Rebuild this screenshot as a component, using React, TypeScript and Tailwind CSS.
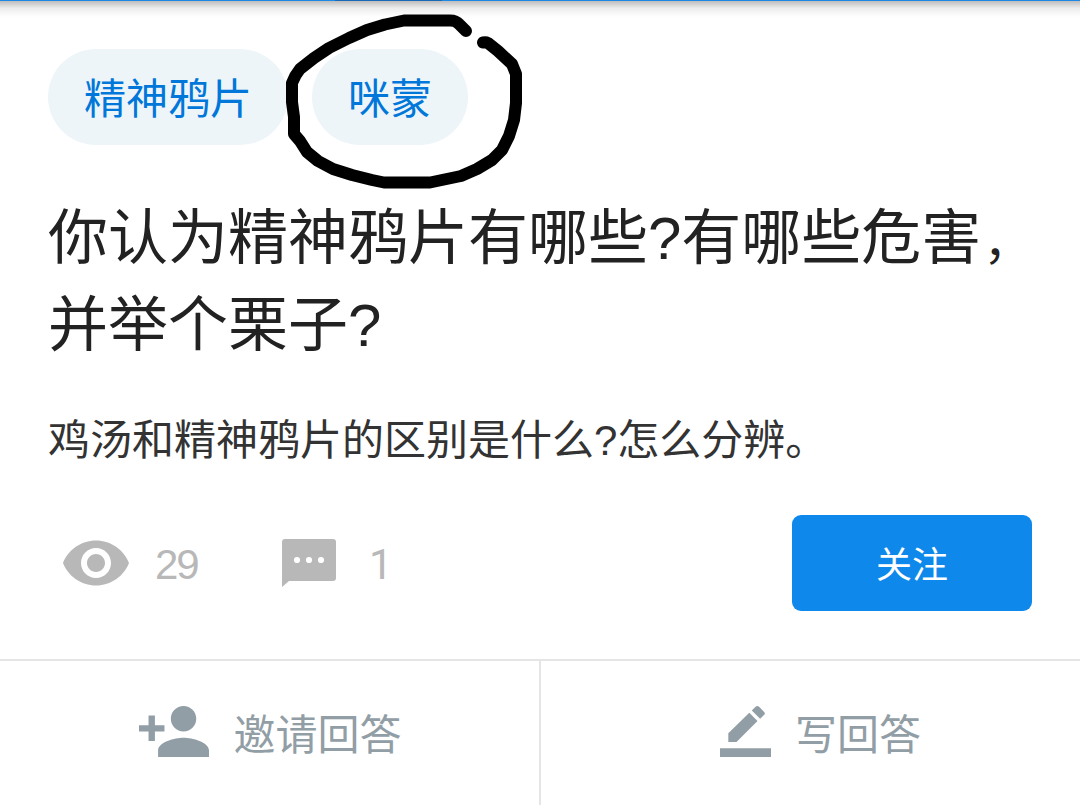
import type { ReactNode } from "react";

const tags = ["精神鸦片", "咪蒙"];

function EyeIcon() {
  return (
    <svg className="h-[72px] w-[72px]" viewBox="0 0 24 24" fill="currentColor">
      <path d="M12 4.5C7 4.5 2.73 7.61 1 12c1.73 4.39 6 7.5 11 7.5s9.27-3.11 11-7.5c-1.73-4.39-6-7.5-11-7.5zM12 17c-2.76 0-5-2.24-5-5s2.24-5 5-5 5 2.24 5 5-2.24 5-5 5zm0-8c-1.66 0-3 1.34-3 3s1.34 3 3 3 3-1.34 3-3-1.34-3-3-3z" />
    </svg>
  );
}

function CommentIcon() {
  return (
    <svg className="h-12 w-[54px]" viewBox="0 0 54 48" fill="currentColor">
      <path d="M3 0H51Q54 0 54 3V39Q54 42 51 42H7L0 48V3Q0 0 3 0Z" />
      <circle cx="15" cy="21" r="3.1" fill="white" />
      <circle cx="27" cy="21" r="3.1" fill="white" />
      <circle cx="39" cy="21" r="3.1" fill="white" />
    </svg>
  );
}

function InviteIcon() {
  return (
    <svg className="h-[51px] w-[70px]" viewBox="1 4 22 16" fill="currentColor">
      <path d="M15 12c2.21 0 4-1.79 4-4s-1.79-4-4-4-4 1.79-4 4 1.79 4 4 4zm-9-2V7H4v3H1v2h3v3h2v-3h3v-2H6zm9 4c-2.67 0-8 1.34-8 4v2h16v-2c0-2.66-5.33-4-8-4z" />
    </svg>
  );
}

function WriteIcon() {
  return (
    <svg className="h-[51px] w-[51px]" viewBox="0 0 51 51" fill="currentColor">
      <path d="M8.3 36V27.3L29.3 6.7L37.5 15L16.5 36Z" />
      <path d="M31.8 4.5L35.8 .6Q37.3 -.6 38.8 .6L44.2 6Q45.5 7.4 44.2 8.8L40.1 12.7Z" />
      <path d="M0 42.3H51V51H0Z" />
    </svg>
  );
}

function Action({ icon, label }: { icon: ReactNode; label: string }) {
  return (
    <button className="flex items-start gap-6 pt-[45px] text-[42px] leading-[60px] text-[#929ea5]">
      {icon}
      <span>{label}</span>
    </button>
  );
}

export default function App() {
  return (
    <div className="relative flex h-[805px] w-[1080px] flex-col overflow-hidden bg-white font-['Liberation_Sans','Noto_Sans_CJK_SC',sans-serif]">
      <div className="h-px shrink-0 bg-[#1e88e5]">
        <div className="ml-[335px] h-px w-[107px] bg-[#1a68b3]"></div>
      </div>
      <div className="h-4 shrink-0 bg-linear-to-b from-[#bdbdbd] via-[#ededed] via-45% to-white"></div>

      <div className="flex flex-1 flex-col px-12 pt-8">
        <div className="flex gap-6">
          {tags.map((tag) => (
            <span
              key={tag}
              className="h-24 rounded-full bg-[#edf5f9] px-9 text-[42px] leading-[102px] text-[#0077d9]"
            >
              {tag}
            </span>
          ))}
        </div>

        <h1 className="mt-[50px] text-[60px] leading-[87px] whitespace-nowrap text-[#222222]">
          你认为精神鸦片有哪些?有哪些危害
          <span className="ml-[2px] text-[48px] leading-none">，</span>
          <br />
          并举个栗子?
        </h1>

        <p className="mt-[42px] text-[42px] leading-[60px] whitespace-nowrap text-[#333333]">
          鸡汤和精神鸦片的区别是什么?怎么分辨。
        </p>

        <div className="mt-[44px] flex h-24 items-center text-[42px] text-[#b8b8b8]">
          <div className="ml-3 flex w-[222px] items-center">
            <EyeIcon />
            <span className="mt-[2px] ml-[23px] tracking-[-2px]">29</span>
          </div>
          <CommentIcon />
          <span className="mt-[2px] ml-[33px] font-['Roboto',sans-serif]">1</span>
          <button className="ml-auto h-24 w-60 rounded-[9px] bg-[#0f88eb] pt-[5px] text-[36px] text-white">
            关注
          </button>
        </div>
      </div>

      <div className="flex h-[146px] shrink-0 border-t-2 border-[#e5e5e5]">
        <div className="flex w-[539px] justify-center pl-[2px]">
          <Action icon={<InviteIcon />} label="邀请回答" />
        </div>
        <div className="w-[2px] bg-[#e5e5e5]"></div>
        <div className="flex w-[539px] justify-center pl-5">
          <Action icon={<WriteIcon />} label="写回答" />
        </div>
      </div>

      {/* hand-drawn ring around the second tag */}
      <svg
        className="pointer-events-none absolute top-0 left-0 h-[200px] w-[540px]"
        viewBox="0 0 540 200"
        fill="none"
        stroke="black"
        strokeWidth="12"
        strokeLinecap="round"
        strokeLinejoin="round"
      >
        <path d="M466 31L459 24Q456 20.5 450 20.5H404L385 24.5L367 30L349 38L329 48L314 58L300 69Q295 75 292 83V102L294 117V134L300 141L307 152L318 161L333 169L352 175L372 180L384 182.5H430L461 176L477 169L492 160L502 150L509 136L514 120L516 103V74L512 64L498 51L488 43Q486 42 483 42.5" />
      </svg>
    </div>
  );
}
